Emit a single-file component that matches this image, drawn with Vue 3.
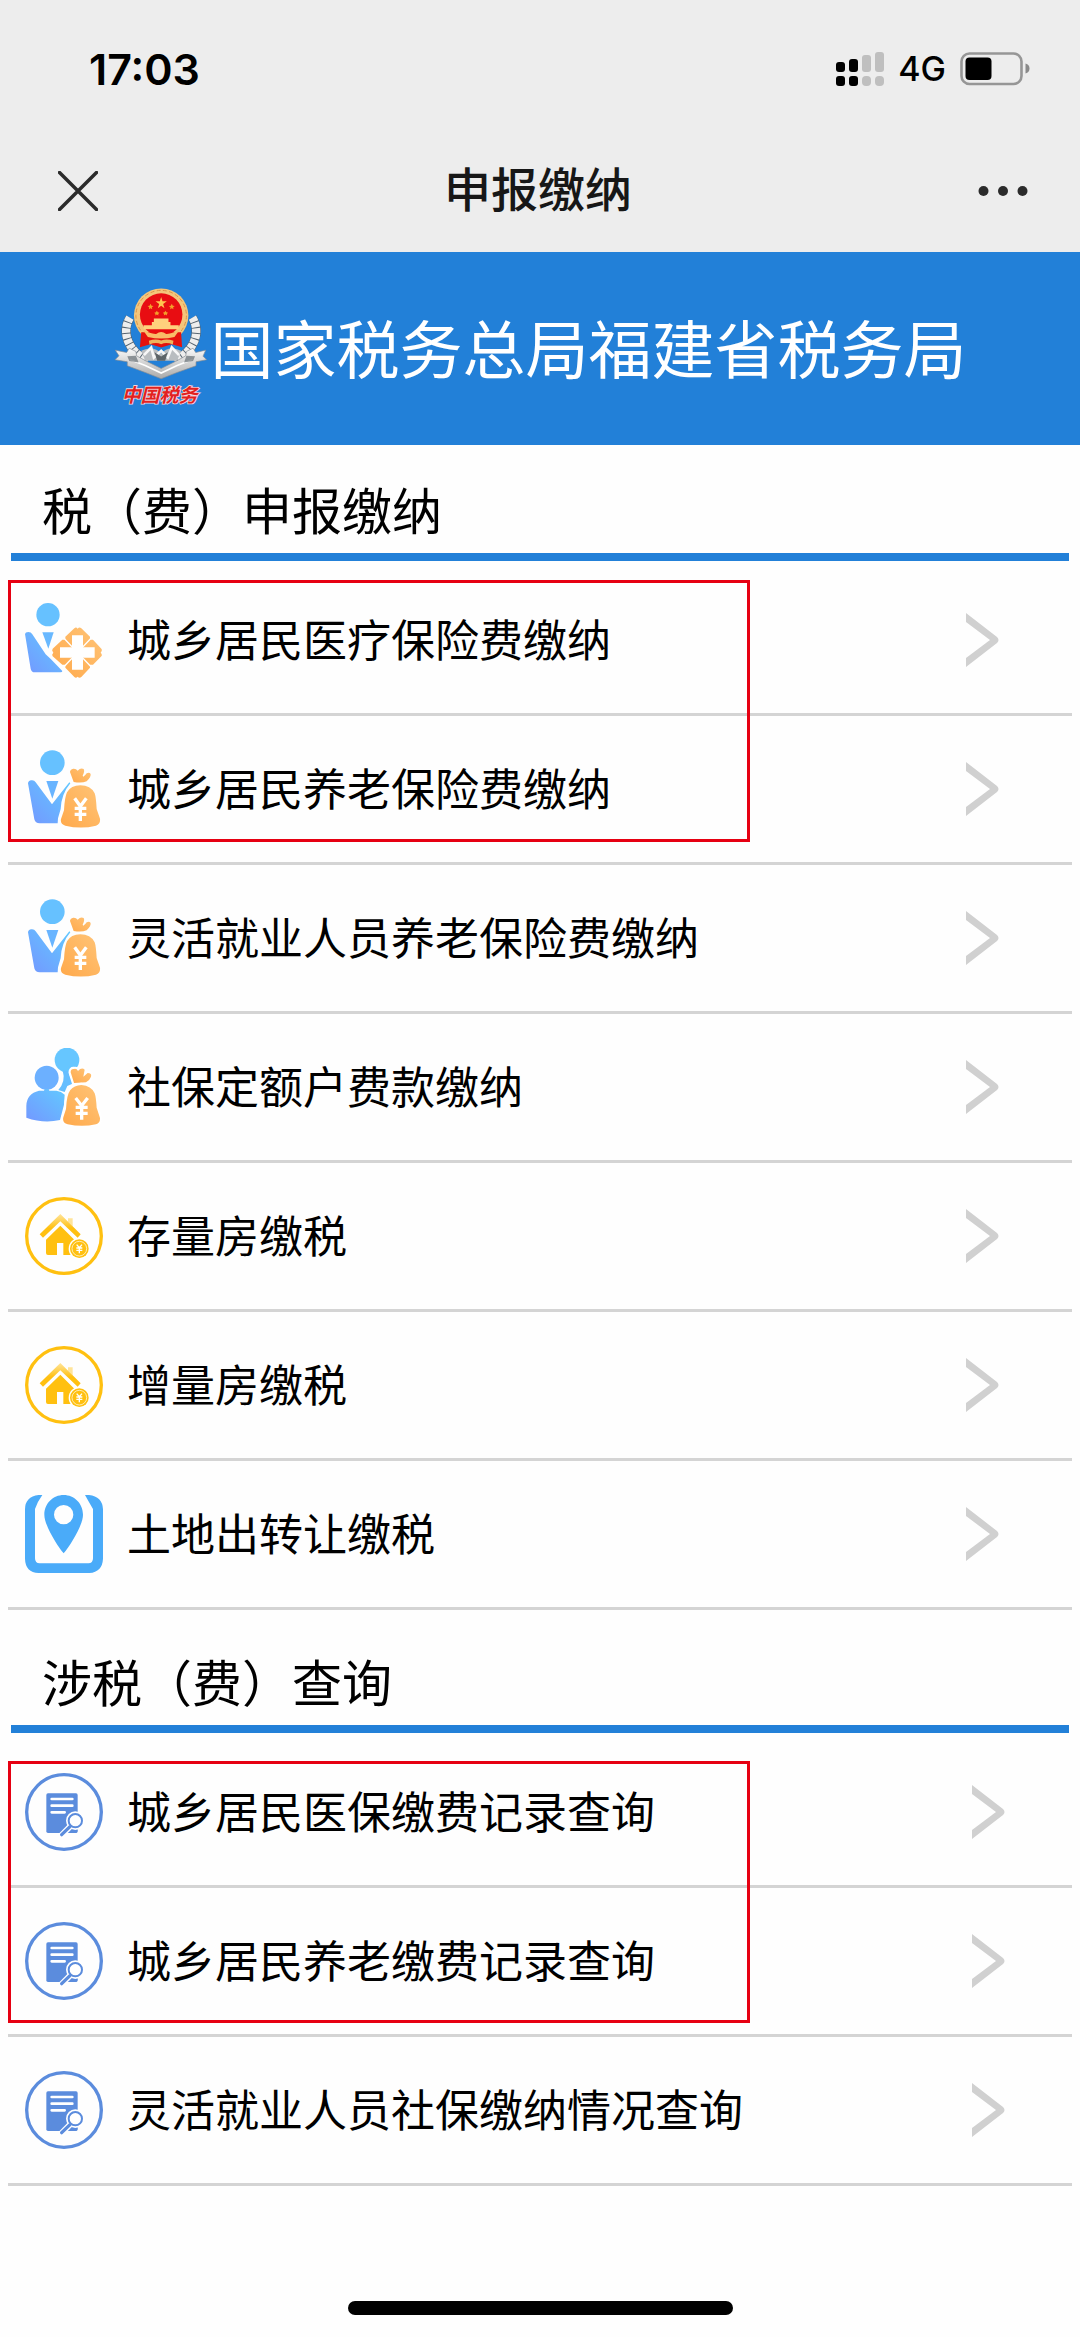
<script setup>
const sections = [
  {
    id: 'declare',
    title: '税（费）申报缴纳',
    items: [
      { icon: 'medical', label: '城乡居民医疗保险费缴纳' },
      { icon: 'pension', label: '城乡居民养老保险费缴纳' },
      { icon: 'pension', label: '灵活就业人员养老保险费缴纳' },
      { icon: 'group', label: '社保定额户费款缴纳' },
      { icon: 'house', label: '存量房缴税' },
      { icon: 'house', label: '增量房缴税' },
      { icon: 'land', label: '土地出转让缴税' },
    ],
  },
  {
    id: 'query',
    title: '涉税（费）查询',
    items: [
      { icon: 'record', label: '城乡居民医保缴费记录查询' },
      { icon: 'record', label: '城乡居民养老缴费记录查询' },
      { icon: 'record', label: '灵活就业人员社保缴纳情况查询' },
    ],
  },
]

const viewBoxes = {
  medical: '45 60 234 234',
  pension: '45 511 234 234',
  group: '45 508 234 234',
  house: '45 57 234 234',
  land: '45 953 234 234',
  record: '45 66 234 234',
}
</script>

<template>
  <div class="page">
    <header class="top">
      <div class="status">
        <span class="time">17:03</span>
        <div class="status-right">
          <svg class="signal" viewBox="0 0 48 36" aria-hidden="true">
            <g fill="#000">
              <rect x="0" y="11" width="9" height="10" rx="3" />
              <rect x="13" y="8" width="9" height="13" rx="3" />
              <rect x="0" y="25" width="9" height="10" rx="3" />
              <rect x="13" y="25" width="9" height="10" rx="3" />
            </g>
            <g fill="#bfbfbf">
              <rect x="26" y="4" width="9" height="17" rx="3" />
              <rect x="39" y="1" width="9" height="20" rx="3" />
              <rect x="26" y="25" width="9" height="10" rx="4" />
              <rect x="39" y="25" width="9" height="10" rx="4" />
            </g>
          </svg>
          <span class="network">4G</span>
          <svg class="battery" viewBox="0 0 70 34" aria-hidden="true">
            <rect x="1.5" y="1.5" width="60" height="30.5" rx="8" fill="none" stroke="#969696" stroke-width="2.6" />
            <rect x="5.5" y="5.5" width="26" height="22.5" rx="4" fill="#000" />
            <path d="M65.500 11.500Q69.500 12.500 69.500 16.500T65.500 21.500Z" fill="#8a8a8a" />
          </svg>
        </div>
      </div>
      <nav class="nav">
        <button class="nav-btn" type="button" aria-label="关闭">
          <svg class="close" viewBox="0 0 40 40"><path d="M1.500 1.500L38.500 38.500M38.500 1.500L1.500 38.500" stroke="#2b2b2b" stroke-width="3.500" stroke-linecap="round" /></svg>
        </button>
        <h1 class="nav-title">申报缴纳</h1>
        <button class="nav-btn" type="button" aria-label="更多">
          <svg class="more" viewBox="0 0 50 12" fill="#2b2b2b"><circle cx="5.500" cy="6" r="5" /><circle cx="25" cy="6" r="5" /><circle cx="44.500" cy="6" r="5" /></svg>
        </button>
      </nav>
    </header>

    <div class="banner">
      <svg class="emblem" viewBox="30 40 280 370" role="img" aria-label="中国税务">
        <defs>
          <linearGradient id="silver" x1="0" y1="0" x2="0" y2="1">
            <stop offset="0" stop-color="#fafafa" />
            <stop offset="1" stop-color="#a9a9a9" />
          </linearGradient>
        </defs>
        <path d="M78 132C52 175 70 232 132 262M266 132C292 175 274 232 212 262" fill="none" stroke="#55636f" stroke-width="28" />
        <path d="M78 132C52 175 70 232 132 262M266 132C292 175 274 232 212 262" fill="none" stroke="#eeeeee" stroke-width="25" stroke-dasharray="14 3" />
        <path d="M112 232Q150 215 172 240Q194 215 232 232L220 262H124Z" fill="#b9bdc0" />
        <path d="M120 245L142 222L150 252L172 232L192 252L204 222L226 245" fill="none" stroke="#f7f7f7" stroke-width="8" />
        <path d="M152 236L172 249L192 236L184 262H160Z" fill="#5d6468" />
        <circle cx="172" cy="126" r="82" fill="#f4c67b" />
        <circle cx="172" cy="126" r="76" fill="none" stroke="#dc9449" stroke-width="3" stroke-dasharray="12 7" />
        <circle cx="172" cy="123" r="64" fill="#e80d12" />
        <path d="M112 176L108 221L140 212L172 222L204 212L235 221L232 176Z" fill="#e5120e" />
        <path d="M172 70L176 83H189L178 91L182 104L172 96L162 104L166 91L155 83H168Z" fill="#ffc550" />
        <path d="M140 90L143 96L149 97L144 101L145 107L140 104L135 107L136 101L131 97L137 96ZM204 90L207 96L213 97L208 101L209 107L204 104L199 107L200 101L195 97L201 96ZM159 111L162 116L167 117L163 121L164 126L159 123L154 126L155 121L151 117L156 116ZM185 111L188 116L193 117L189 121L190 126L185 123L180 126L181 121L177 117L182 116Z" fill="#f3a02a" />
        <path d="M150 135H194V145H200V155H225V167H119V155H144V145H150Z" fill="#ffd17d" />
        <path d="M116 168Q140 182 157 181Q172 170 187 181Q204 182 228 168L212 190Q172 200 132 190Z" fill="#f9bd68" />
        <path d="M135 202Q155 195 172 201Q189 195 209 202L207 213Q188 205 172 212Q156 205 137 213Z" fill="#efb45d" />
        <path d="M34 230L68 237L76 224L96 234L98 247L125 262L172 285L219 262L246 247L248 234L268 224L276 237L306 230L298 248L309 259L277 265V277L218 298L172 316L126 298L70 277V265L33 259L45 247Z" fill="url(#silver)" stroke="#878d92" stroke-width="2" />
        <path d="M78 258L124 276L172 299L220 276L266 258" fill="none" stroke="#ffffff" stroke-width="5" />
        <path d="M70 248L96 247L104 267L76 263ZM248 247L274 248L268 263L241 267Z" fill="#666f75" opacity=".7" />
        <text class="emblem-text" x="53" y="387">中国税务</text>
      </svg>
      <h2 class="banner-title">国家税务总局福建省税务局</h2>
    </div>

    <main class="content">
      <section v-for="section in sections" :key="section.id" :class="['section', section.id]">
        <h3 class="section-title">{{ section.title }}</h3>
        <div class="list">
          <a v-for="item in section.items" :key="item.label" class="row" href="#">
            <svg class="icon" :viewBox="viewBoxes[item.icon]" aria-hidden="true">
              <defs>
                <linearGradient id="blue" x1="1" y1="0" x2="0" y2="1">
                  <stop offset="0" stop-color="#62c9ff" />
                  <stop offset="1" stop-color="#7398ff" />
                </linearGradient>
                <linearGradient id="orange" x1="1" y1="0" x2="0" y2="1">
                  <stop offset="0" stop-color="#ffc477" />
                  <stop offset="1" stop-color="#ffa94b" />
                </linearGradient>
                <linearGradient id="roof" x1="0" y1="0" x2="0" y2="1">
                  <stop offset="0" stop-color="#ffe49a" />
                  <stop offset=".6" stop-color="#ffc010" />
                </linearGradient>
              </defs>

              <template v-if="item.icon === 'medical'">
                <circle cx="114" cy="101" r="35" fill="#66c1ff" />
                <path d="M97 154H131L115 203Z" fill="#68b8ff" />
                <path d="M45 159Q46 153 55 153Q63 153 67 160L107 220L123 235L157 270Q157 274 151 274H75Q64 274 62 263Z" fill="url(#blue)" />
                <path d="M193 142Q198 137 203 143Q208 137 214 142L240 167V176H249L274 203Q278 207 272 215Q278 222 274 226L249 251H240V260L214 288Q208 293 203 287Q198 293 193 288L166 260V251H157L128 226Q124 221 130 215Q124 208 128 203L157 176H166V167Z" fill="url(#orange)" />
                <path d="M186 163H219V199H254V230H219V266H186V230H150V199H186Z" fill="#fff" />
                <path d="M164 174L186 197M241 174L219 197M164 255L186 232M241 255L219 232" stroke="#fff" stroke-width="4" />
              </template>

              <template v-else-if="item.icon === 'pension'">
                <circle cx="127" cy="549" r="37" fill="#66c1ff" />
                <path d="M109 604H145L127 657Z" fill="#68b4ff" />
                <path d="M54 611Q55 603 64 602Q73 601 77 608L126 674L178 608L181 611Q154 643 152 688L144 716L143 731H89Q76 731 73 719Z" fill="url(#blue)" />
                <path d="M191 607L180 577Q180 569 190 567Q198 566 203 573Q212 563 221 568Q225 574 218 588L220 591Q228 585 230 581Q238 576 242 583Q243 593 230 605Q216 611 191 607Z" fill="url(#orange)" />
                <path d="M211 617Q242 617 254 641Q258 652 260 688Q263 697 270 717Q272 733 258 738Q213 749 166 738Q150 733 153 718L162 692Q164 653 171 638Q183 617 211 617Z" fill="url(#orange)" />
                <path d="M194 656L211 680L229 656M194 686H229M194 704H229M211 680V724" fill="none" stroke="#fff" stroke-width="10" />
              </template>

              <template v-else-if="item.icon === 'group'">
                <circle cx="171" cy="544" r="37" fill="#66c6ff" />
                <path d="M158 576H176Q179 600 194 612L172 622L164 640L145 634Q168 607 158 576Z" fill="#65beff" />
                <circle cx="110" cy="597" r="41" fill="#fff" />
                <circle cx="110" cy="597" r="36" fill="#6cb0ff" />
                <path d="M104 631H116L118 636H139Q154 638 164 648L162 678L150 724Q100 735 49 717V681Q50 645 87 636H102Z" fill="url(#blue)" />
                <path d="M192 613L182 581Q182 570 192 571Q200 569 204 577Q215 565 224 573L220 594L233 583Q246 583 243 594Q239 605 228 611Z" fill="url(#orange)" stroke="#fff" stroke-width="13" stroke-linejoin="round" paint-order="stroke" />
                <path d="M214 619Q244 621 254 644Q258 655 260 687L270 718Q271 733 258 737Q216 746 173 737Q156 732 160 716L168 691Q170 648 181 634Q192 620 214 619Z" fill="url(#orange)" stroke="#fff" stroke-width="13" paint-order="stroke" />
                <path d="M197 658L215 681L233 658M197 686H233M197 704H233M215 681V723" fill="none" stroke="#fff" stroke-width="10" />
              </template>

              <template v-else-if="item.icon === 'house'">
                <circle cx="162" cy="174" r="112" fill="none" stroke="#ffc010" stroke-width="10" />
                <path d="M174 121H188V145L174 131Z" fill="#ffe49a" />
                <path d="M89 169L151 108L212 169L203 179L151 130L99 179Z" fill="url(#roof)" />
                <path d="M108 185L151 143L193 185V231H160V195H141V231H114Q108 231 108 225Z" fill="#ffc010" />
                <circle cx="208" cy="212" r="32" fill="#fff" />
                <circle cx="208" cy="212" r="28" fill="#ffc010" />
                <circle cx="208" cy="212" r="22" fill="none" stroke="#fff" stroke-width="2" />
                <path d="M200 200L208 209L216 200M199 210H217M199 217H217M208 209V226" fill="none" stroke="#fff" stroke-width="4" />
              </template>

              <template v-else-if="item.icon === 'land'">
                <path d="M97 953H86Q45 958 45 996V1144Q46 1185 86 1187H238Q277 1184 279 1144V996Q277 957 237 953H225Q236 973 249 995V1143Q249 1158 235 1158H89Q75 1158 75 1143V995Q83 972 97 953Z" fill="#4aabf9" />
                <path fill-rule="evenodd" d="M161 953C193 953 219 979 219 1012C219 1042 183 1102 161 1128C139 1102 103 1042 103 1012C103 979 129 953 161 953ZM161 983A29 29 0 1 0 161 1041A29 29 0 1 0 161 983Z" fill="#4aabf9" />
              </template>

              <template v-else>
                <circle cx="162" cy="183" r="112" fill="none" stroke="#5b8cdd" stroke-width="10" />
                <rect x="109" y="127" width="94" height="119" rx="5" fill="#5b8cdd" />
                <path d="M125 144H187M125 164H187M125 184H164" stroke="#fff" stroke-width="8" stroke-linecap="round" />
                <circle cx="196" cy="209" r="28" fill="#fff" />
                <path d="M180 227L152 255" stroke="#fff" stroke-width="18" />
                <circle cx="196" cy="209" r="20" fill="#fff" stroke="#5b8cdd" stroke-width="6" />
                <path d="M180 227L155 251" stroke="#5b8cdd" stroke-width="10" stroke-linecap="round" />
                <path d="M184 236Q194 239 203 237L199 246H179Z" fill="#5b8cdd" />
              </template>
            </svg>
            <span class="label">{{ item.label }}</span>
            <svg class="arrow" viewBox="0 0 33 54" aria-hidden="true"><path d="M0 0L31 24Q34 27 31 30L0 54V45L24 27L0 9Z" fill="#d0d0d0" /></svg>
          </a>
          <div class="highlight"></div>
        </div>
      </section>
    </main>

    <div class="home-indicator"></div>
  </div>
</template>

<style>
body {
  margin: 0;
  background: #fefefe;
}
</style>

<style scoped>
.page {
  display: flex;
  flex-direction: column;
  min-height: 100vh;
  color: #000;
  background: #fefefe;
  font-family: "Noto Sans CJK SC", sans-serif;
}

.top {
  background: #ededed;
}

.status {
  display: flex;
  align-items: center;
  justify-content: space-between;
  height: 138px;
  padding: 0 50px 0 89px;
}

.time {
  font: 600 43px/50px Inter, sans-serif;
}

.status-right {
  display: flex;
  align-items: center;
  gap: 14px;
}

.signal {
  width: 48px;
  height: 36px;
}

.network {
  font: 500 34px/40px Inter, sans-serif;
}

.battery {
  width: 70px;
  height: 34px;
}

.nav {
  display: flex;
  align-items: center;
  justify-content: space-between;
  height: 106px;
  padding: 0 52px 8px 58px;
}

.nav-btn {
  display: flex;
  padding: 0;
  border: 0;
  background: none;
}

.close {
  width: 40px;
  height: 40px;
}

.more {
  width: 50px;
  height: 12px;
}

.nav-title {
  margin: 0;
  padding-bottom: 8px;
  color: #171717;
  font-size: 47px;
  font-weight: 500;
  line-height: 60px;
}

.banner {
  display: flex;
  align-items: center;
  justify-content: center;
  gap: 4px;
  height: 193px;
  background: #2280d8;
}

.emblem {
  flex: none;
  width: 93px;
  height: 123px;
}

.emblem-text {
  fill: #e2211f;
  stroke: #f5d5da;
  stroke-width: 5px;
  paint-order: stroke;
  font-size: 57px;
  font-style: italic;
  font-weight: 700;
}

.banner-title {
  margin: 0;
  padding-bottom: 6px;
  color: #fff;
  font-size: 63px;
  font-weight: 400;
  line-height: 80px;
  white-space: nowrap;
}

.section-title {
  margin: 0 11px;
  padding: 28px 31px 10px;
  border-bottom: 8px solid #2280d8;
  font-size: 50px;
  font-weight: 400;
  line-height: 70px;
}

.query .section-title {
  padding-top: 35px;
}

.list {
  position: relative;
  margin: 6px 8px 0;
}

.row {
  display: flex;
  align-items: center;
  gap: 24px;
  height: 146px;
  padding: 0 73px 0 17px;
  border-bottom: 3px solid #d4d4d4;
  color: #000;
  text-decoration: none;
}

.query .row {
  padding-right: 67px;
}

.icon {
  flex: none;
  width: 78px;
  height: 78px;
}

.label {
  flex: 1;
  padding-bottom: 4px;
  font-size: 44px;
  line-height: 64px;
}

.arrow {
  flex: none;
  width: 33px;
  height: 54px;
}

.highlight {
  position: absolute;
  top: 13px;
  left: 0;
  width: 742px;
  height: 262px;
  box-sizing: border-box;
  border: 3px solid #e60012;
  pointer-events: none;
}

.query .highlight {
  top: 22px;
}

.home-indicator {
  width: 385px;
  height: 14px;
  margin: auto auto 22px;
  border-radius: 7px;
  background: #000;
}
</style>
